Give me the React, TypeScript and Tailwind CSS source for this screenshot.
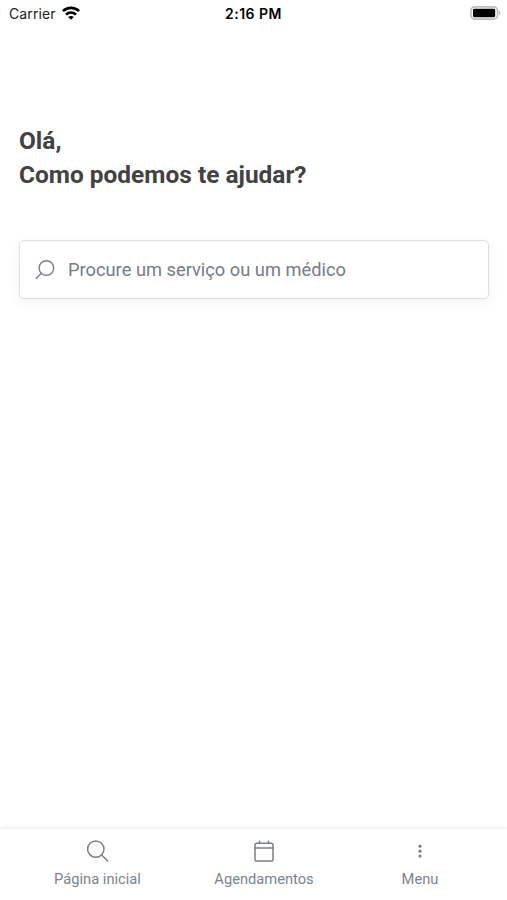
import type { ReactNode } from "react";

const WifiIcon = () => (
    <svg className="mb-[2px] ml-[6px] h-[14px] w-[18px]" viewBox="0 0 18 14" fill="none" stroke="#000" strokeWidth="2.6">
        <path d="M0.9 5.2C5.4 0.7 12.6 0.7 17.1 5.2" />
        <path d="M4 8.6C6.8 5.8 11.2 5.8 14 8.6" />
        <path d="M9 13.8L6.2 11C7.8 9.6 10.2 9.6 11.8 11Z" fill="#000" stroke="none" />
    </svg>
);

const BatteryIcon = () => (
    <svg className="mb-[2px] h-[14px] w-[31px]" viewBox="0 0 31 14" fill="none">
        <rect x="0.9" y="0.9" width="26.6" height="12.2" rx="3.8" stroke="#bcbcbc" strokeWidth="1.6" />
        <rect x="3" y="2.7" width="22.2" height="8.6" rx="1.2" fill="#000" />
        <path d="M28.8 4.8C30.8 5.4 30.8 8.6 28.8 9.2Z" fill="#b0b0b0" />
    </svg>
);

const StatusBar = () => (
    <header className="grid h-7 grid-cols-3 items-center pr-[6px] pl-[9px] font-['Inter','Liberation_Sans',sans-serif] text-black">
        <div className="flex items-center">
            <span className="text-[14px] leading-none tracking-[0.1px] text-[#222]">Carrier</span>
            <WifiIcon />
        </div>
        <span className="pr-[3px] pb-px text-center text-[14px] leading-none font-semibold tracking-[0.5px]">2:16 PM</span>
        <div className="flex justify-end">
            <BatteryIcon />
        </div>
    </header>
);

interface NavItemProps {
    label: string;
    className: string;
    children: ReactNode;
}

const NavItem = ({ label, className, children }: NavItemProps) => (
    <button type="button" className={`flex flex-col items-center ${className}`}>
        <svg className="h-6 w-6" viewBox="0 0 24 24" fill="none" stroke="#7b8088" strokeWidth="1.5" strokeLinecap="round">
            {children}
        </svg>
        <span className="mt-[6px] text-[14.7px] leading-5 whitespace-nowrap text-[#7b838c]">{label}</span>
    </button>
);

export default function App() {
    return (
        <div className="flex h-screen w-full flex-col overflow-hidden bg-white font-['Roboto',sans-serif]">
            <StatusBar />

            <main className="flex-1 pt-[96px] pr-[18px] pl-[19px]">
                <h1 className="text-[24.45px] leading-[34px] font-bold text-[#424242]">
                    Olá,
                    <br />
                    Como podemos te ajudar?
                </h1>

                <label className="mt-[48px] flex h-[59px] items-center rounded-[5px] border border-[#dfdfdf] bg-white px-[15px] shadow-[0_4px_14px_rgba(0,0,0,0.05)]">
                    <svg className="h-5 w-5 shrink-0" viewBox="0 0 20 20" fill="none" stroke="#7b8088" strokeWidth="1.4" strokeLinecap="round">
                        <circle cx="11.4" cy="8" r="7.3" />
                        <path d="M6.3 13.2L1.2 18.4" />
                    </svg>
                    <input
                        type="text"
                        placeholder="Procure um serviço ou um médico"
                        className="mt-px ml-[13px] min-w-0 flex-1 bg-transparent text-[18.3px] text-[#757c86] outline-none placeholder:text-[#757c86]"
                    />
                </label>
            </main>

            <nav className="flex h-[71px] items-start bg-white pt-[10px] pl-[54px] shadow-[0_-1px_4px_rgba(0,0,0,0.1)]">
                <NavItem label="Página inicial" className="w-[87px]">
                    <circle cx="9.8" cy="10.1" r="8.2" />
                    <path d="M15.7 16L21.7 22" />
                </NavItem>
                <NavItem label="Agendamentos" className="ml-[73px] w-[100px]">
                    <rect x="3" y="4.2" width="18" height="17.8" rx="1.8" />
                    <path d="M3 9H21M7.5 2.2V4M16.5 2.2V4" />
                </NavItem>
                <NavItem label="Menu" className="ml-[87px] w-[38px]">
                    <g fill="#7b8088" stroke="none">
                        <circle cx="12" cy="7.2" r="1.6" />
                        <circle cx="12" cy="12.2" r="1.6" />
                        <circle cx="12" cy="17" r="1.6" />
                    </g>
                </NavItem>
            </nav>
        </div>
    );
}
